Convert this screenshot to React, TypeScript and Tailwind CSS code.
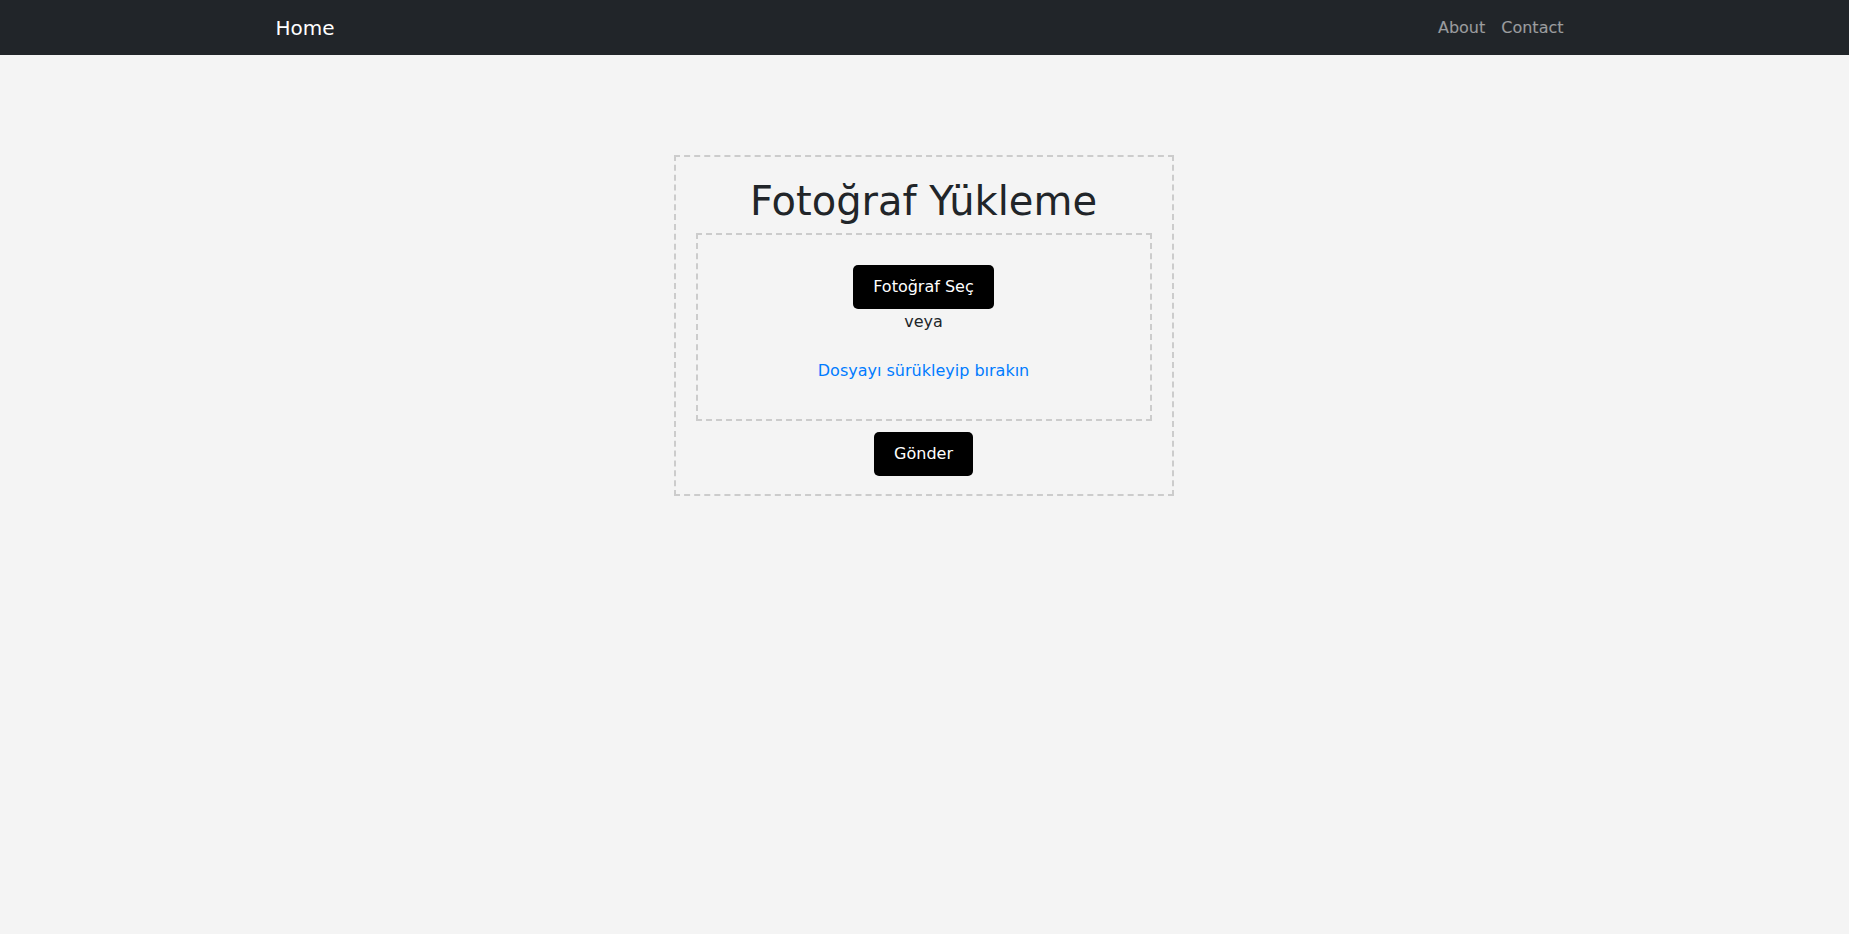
import React from 'react';

const font = { fontFamily: '"DejaVu Sans", sans-serif' };

const App = () => {
  return (
    <div className="min-h-screen bg-[#f4f4f4] text-[#212529] text-base leading-normal pr-[2px]" style={font}>
      <nav className="h-[55px] bg-[#212529] flex items-center -mr-[2px] pr-[2px]">
        <div className="w-[1320px] mx-auto px-[12px] flex items-center justify-between">
          <a href="#" className="text-[20px] leading-[30px] text-white">Home</a>
          <ul className="flex items-center">
            <li><a href="#" className="block px-[8px] py-[8px] text-white/55">About</a></li>
            <li><a href="#" className="block px-[8px] py-[8px] text-white/55">Contact</a></li>
          </ul>
        </div>
      </nav>

      <div className="w-[500px] mx-auto mt-[100px] border-2 border-dashed border-[#cccccc] px-[20px] pt-[20px] pb-[18px] text-center">
        <h1 className="text-[40px] leading-[1.2] font-normal mb-[8px]">Fotoğraf Yükleme</h1>

        {/* drop zone */}
        <div className="border-2 border-dashed border-[#cccccc] pt-[30px] pb-[36px] flex flex-col items-center">
          <button className="bg-black text-white rounded-[5px] px-[20px] py-[10px] leading-[24px]">Fotoğraf Seç</button>
          <p className="mt-[1px] leading-[24px]">veya</p>
          <p className="mt-[25px] leading-[24px] text-[#007bff]">Dosyayı sürükleyip bırakın</p>
        </div>

        <button className="mt-[11px] bg-black text-white rounded-[5px] px-[20px] py-[10px] leading-[24px]">Gönder</button>
      </div>
    </div>
  );
};

export default App;
